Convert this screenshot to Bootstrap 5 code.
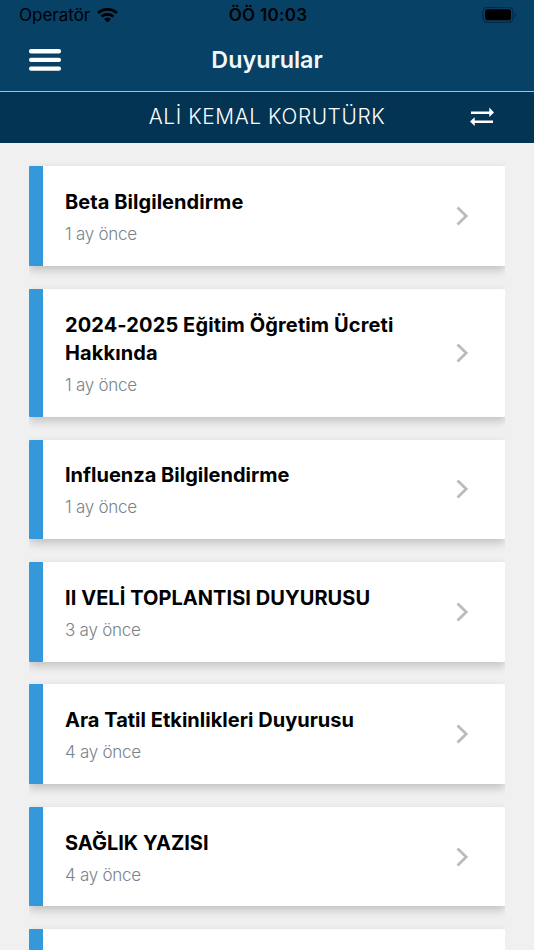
<!DOCTYPE html>
<html lang="tr">
<head>
<meta charset="utf-8">
<meta name="viewport" content="width=device-width, initial-scale=1">
<title>Duyurular</title>
<link href="https://cdn.jsdelivr.net/npm/bootstrap@5.3.0/dist/css/bootstrap.min.css" rel="stylesheet">
<style>
  html, body { height: 100%; }
  body { font-family: Inter, "Liberation Sans", sans-serif; background: #f0f0f0; }
  .screen { height: 950px; }
  .topbar { background: #084166; height: 92px; border-bottom: 1.5px solid #a5bfcd; }
  .status { height: 30px; color: #000; font-size: 17px; line-height: 30px; padding: 0 17px 0 19px; }
  .status > * { flex: 1 1 0; }
  .wifi { margin-left: 7px; }
  .status-time { font-weight: 600; letter-spacing: .3px; }
  .title-row { height: 60px; padding: 0 29px; }
  .title-row > *, .student-bar > * { flex: 1 1 0; }
  .page-title { flex: 0 0 auto; font-size: 23.3px; font-weight: 600; color: #f3f6fa; line-height: 60px; }
  .student-bar { background: #033453; height: 51px; padding: 0 40px; color: #fff; }
  .student-name { flex: 0 0 auto; font-size: 20.8px; font-weight: 300; line-height: 48px; padding-bottom: 2px; letter-spacing: .62px; }
  .notices { padding: 23.3px 0 0; margin: 0 29px; gap: 22.7px; overflow: clip; }
  .notice { flex: none; min-height: 99.7px; border-left: 14px solid #3498db; border-radius: 1px; padding: 21.85px 36px 21.85px 22px; box-shadow: 0 4px 10px rgba(0,0,0,.2); }
  .notice-title { font-size: 20px; line-height: 28.5px; font-weight: 700; color: #000; letter-spacing: .06px; }
  .t2 { letter-spacing: .11px; }
  .t3, .t6 { letter-spacing: 0; }
  .t5 { letter-spacing: .02px; }
  .notice-date { font-size: 17px; line-height: 20px; margin-top: 7.5px; font-weight: 300; color: #78848b; letter-spacing: -.25px; }
</style>
</head>
<body>
<div class="screen d-flex flex-column overflow-hidden">
  <header class="topbar flex-shrink-0">
    <div class="status d-flex align-items-center">
      <div class="d-flex align-items-center">
        <span class="carrier">Operatör</span>
        <svg class="wifi" width="21" height="15" viewBox="0 0 21 15"><path d="M10.500 0C6.500 0 2.900 1.500.2 4.100L2.100 6C4.300 3.900 7.300 2.700 10.500 2.700S16.700 3.900 18.900 6l1.900-1.900C18.100 1.500 14.500 0 10.500 0zM10.500 5C7.900 5 5.500 6 3.700 7.700l1.900 1.900c1.300-1.200 3-1.900 4.900-1.900s3.600.7 4.900 1.900l1.900-1.900C15.500 6 13.100 5 10.500 5zM10.500 9.800c-1.300 0-2.500.5-3.300 1.300l3.300 3.500 3.300-3.500c-.8-.8-2-1.300-3.300-1.300z"/></svg>
      </div>
      <div class="status-time text-center">ÖÖ 10:03</div>
      <div class="d-flex justify-content-end align-items-center">
        <svg width="35" height="17" viewBox="0 0 35 17"><rect x="1" y=".3" width="30" height="15" rx="4.500" fill="none" stroke="#052a42" stroke-width="1.300"/><rect x="3" y="2.300" width="26" height="11" rx="2.500"/><path d="M32.700 5.800v4.500c1-.4 1.400-1.200 1.400-2.300s-.4-1.800-1.400-2.200z" fill="#052a42"/></svg>
      </div>
    </div>
    <div class="title-row d-flex align-items-center">
      <div class="d-flex"><svg width="32" height="22" viewBox="0 0 32 22" fill="#fff"><rect y="0" width="32" height="4.400" rx="2"/><rect y="8.700" width="32" height="4.400" rx="2"/><rect y="17.400" width="32" height="4.400" rx="2"/></svg></div>
      <h1 class="page-title m-0">Duyurular</h1>
      <div></div>
    </div>
  </header>
  <div class="student-bar d-flex align-items-center flex-shrink-0">
    <div></div>
    <div class="student-name">ALİ KEMAL KORUTÜRK</div>
    <div class="d-flex justify-content-end pb-1"><svg width="24" height="20" viewBox="0 -2 24 20" fill="#fff"><path d="M1 3.400h18.300V-.5L24 4.400 19.300 9V6H1zM23 12.500H4.700V9.300L0 13.600 4.700 18v-2.900H23z"/></svg></div>
  </div>
  <main class="notices d-flex flex-column flex-grow-1">
    <article class="notice bg-white d-flex align-items-center justify-content-between"><div><div class="notice-title t1">Beta Bilgilendirme</div><div class="notice-date">1 ay önce</div></div><svg width="13" height="20" viewBox="0 0 13 20"><path d="M1.500 1.500 10.200 10 1.500 18.500" fill="none" stroke="#bbb" stroke-width="2.800"/></svg></article>
    <article class="notice bg-white d-flex align-items-center justify-content-between"><div><div class="notice-title t2">2024-2025 Eğitim Öğretim Ücreti<br>Hakkında</div><div class="notice-date">1 ay önce</div></div><svg width="13" height="20" viewBox="0 0 13 20"><path d="M1.500 1.500 10.200 10 1.500 18.500" fill="none" stroke="#bbb" stroke-width="2.800"/></svg></article>
    <article class="notice bg-white d-flex align-items-center justify-content-between"><div><div class="notice-title t3">Influenza Bilgilendirme</div><div class="notice-date">1 ay önce</div></div><svg width="13" height="20" viewBox="0 0 13 20"><path d="M1.500 1.500 10.200 10 1.500 18.500" fill="none" stroke="#bbb" stroke-width="2.800"/></svg></article>
    <article class="notice bg-white d-flex align-items-center justify-content-between"><div><div class="notice-title t4">II VELİ TOPLANTISI DUYURUSU</div><div class="notice-date">3 ay önce</div></div><svg width="13" height="20" viewBox="0 0 13 20"><path d="M1.500 1.500 10.200 10 1.500 18.500" fill="none" stroke="#bbb" stroke-width="2.800"/></svg></article>
    <article class="notice bg-white d-flex align-items-center justify-content-between"><div><div class="notice-title t5">Ara Tatil Etkinlikleri Duyurusu</div><div class="notice-date">4 ay önce</div></div><svg width="13" height="20" viewBox="0 0 13 20"><path d="M1.500 1.500 10.200 10 1.500 18.500" fill="none" stroke="#bbb" stroke-width="2.800"/></svg></article>
    <article class="notice bg-white d-flex align-items-center justify-content-between"><div><div class="notice-title t6">SAĞLIK YAZISI</div><div class="notice-date">4 ay önce</div></div><svg width="13" height="20" viewBox="0 0 13 20"><path d="M1.500 1.500 10.200 10 1.500 18.500" fill="none" stroke="#bbb" stroke-width="2.800"/></svg></article>
    <article class="notice bg-white"></article>
  </main>
</div>
<script src="https://cdn.jsdelivr.net/npm/bootstrap@5.3.0/dist/js/bootstrap.bundle.min.js"></script>
</body>
</html>
